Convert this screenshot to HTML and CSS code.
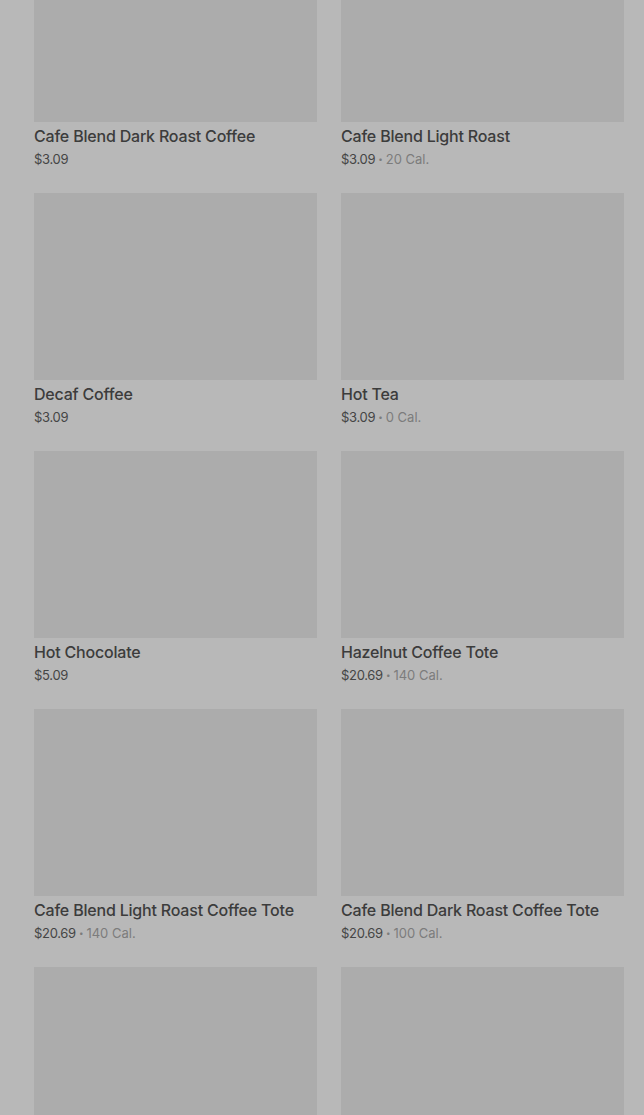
FILE: index.html
```html
<!DOCTYPE html>
<html lang="en">
<head>
  <meta charset="UTF-8">
  <meta name="viewport" content="width=device-width, initial-scale=1.0">
  <title>Menu</title>
  <link rel="stylesheet" href="styles.css">
</head>
<body>

<div class="menu-grid">
  <div class="item">
    <div class="item-photo"></div>
    <div class="item-name">Cafe Blend Dark Roast Coffee</div>
    <div class="item-meta"><span class="price">$3.09</span></div>
  </div>
  <div class="item">
    <div class="item-photo"></div>
    <div class="item-name">Cafe Blend Light Roast</div>
    <div class="item-meta"><span class="price">$3.09</span><span class="dot">•</span><span class="cal">20 Cal.</span></div>
  </div>

  <div class="item">
    <div class="item-photo"></div>
    <div class="item-name">Decaf Coffee</div>
    <div class="item-meta"><span class="price">$3.09</span></div>
  </div>
  <div class="item">
    <div class="item-photo"></div>
    <div class="item-name">Hot Tea</div>
    <div class="item-meta"><span class="price">$3.09</span><span class="dot">•</span><span class="cal">0 Cal.</span></div>
  </div>

  <div class="item">
    <div class="item-photo"></div>
    <div class="item-name">Hot Chocolate</div>
    <div class="item-meta"><span class="price">$5.09</span></div>
  </div>
  <div class="item">
    <div class="item-photo"></div>
    <div class="item-name">Hazelnut Coffee Tote</div>
    <div class="item-meta"><span class="price">$20.69</span><span class="dot">•</span><span class="cal">140 Cal.</span></div>
  </div>

  <div class="item">
    <div class="item-photo"></div>
    <div class="item-name">Cafe Blend Light Roast Coffee Tote</div>
    <div class="item-meta"><span class="price">$20.69</span><span class="dot">•</span><span class="cal">140 Cal.</span></div>
  </div>
  <div class="item">
    <div class="item-photo"></div>
    <div class="item-name">Cafe Blend Dark Roast Coffee Tote</div>
    <div class="item-meta"><span class="price">$20.69</span><span class="dot">•</span><span class="cal">100 Cal.</span></div>
  </div>

  <div class="item">
    <div class="item-photo"></div>
  </div>
  <div class="item">
    <div class="item-photo"></div>
  </div>
</div>

</body>
</html>
```

FILE: styles.css
```css
/* General Styles */
body {
  font-family: 'Inter', 'Noto Sans', sans-serif;
  margin: 0;
  padding: 0;
  background: #b8b8b8;
  color: #3a3a3a;
  overflow: hidden;
}

.menu-grid {
  display: grid;
  grid-template-columns: 283px 283px;
  column-gap: 24px;
  row-gap: 24px;
  margin-top: -65px;
  padding: 0 20px 0 34px;
}

.item-photo {
  height: 187px;
  background: #acacac;
}

.item-name {
  margin-top: 4px;
  height: 20px;
  font-size: 16px;
  line-height: 20px;
  font-weight: 500;
  letter-spacing: -0.2px;
  color: #3c3c3c;
}

.item-meta {
  display: flex;
  align-items: center;
  margin-top: 3px;
  height: 20px;
  font-size: 13px;
  line-height: 20px;
}

.price {
  color: #454545;
  letter-spacing: -0.3px;
}

.dot {
  margin: 0 3px 0 3px;
  font-size: 8px;
  line-height: 8px;
  color: #7c7c7c;
}

.cal {
  color: #7c7c7c;
}
```
